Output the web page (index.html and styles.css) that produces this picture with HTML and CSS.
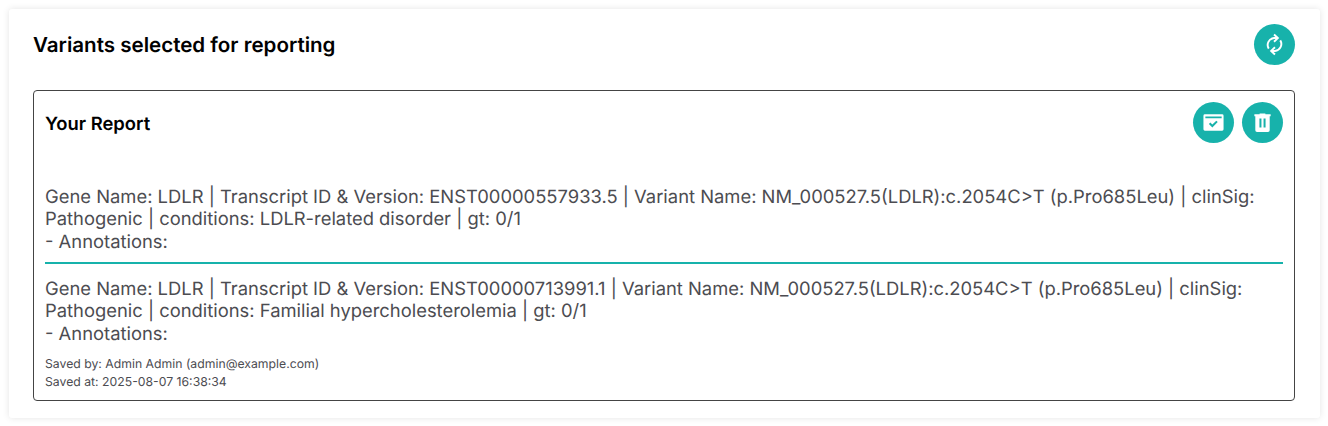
FILE: index.html
```html
<!DOCTYPE html>
<html lang="en">
<head>
<meta charset="utf-8">
<title>Variants selected for reporting</title>
<link rel="stylesheet" href="styles.css">
</head>
<body>
<main class="panel">
  <header class="panel-header">
    <h1 class="title">Variants selected for reporting</h1>
    <button class="round-button" aria-label="Refresh"><svg class="icon refresh" viewBox="0 0 24 24"><path d="M6 16.300A7.200 7.200 0 0 1 11.500 5.300H15M11.500 1.500 15.500 5.300l-4 3.800M18 7.700A7.200 7.200 0 0 1 12.500 18.700H9M12.500 22.500 8.500 18.700l4-3.800"/></svg></button>
  </header>
  <section class="report">
    <div class="report-header">
      <h2 class="subtitle">Your Report</h2>
      <div class="actions">
        <button class="round-button" aria-label="Approve"><svg class="icon" viewBox="0 0 24 24"><path fill-rule="evenodd" d="M3 3.500h18a1.500 1.500 0 0 1 1.500 1.500v14a1.500 1.500 0 0 1-1.500 1.500H3A1.500 1.500 0 0 1 1.500 19V5A1.500 1.500 0 0 1 3 3.500zm.5 2.300v1.700h17V5.800zm7.300 11.400 5.600-5.600-1.500-1.500-4.100 4.100-2.100-2.100-1.500 1.500z"/></svg></button>
        <button class="round-button" aria-label="Delete"><svg class="icon" viewBox="0 0 24 24"><path fill-rule="evenodd" d="M15 2.500H9v1H3.500v2h1V20a1.800 1.800 0 0 0 1.800 1.800h11.400a1.800 1.800 0 0 0 1.800-1.800V5.500h1v-2H15zM8.800 7.800h2.100v9.500H8.800zm4.300 0h2.100v9.500h-2.100z"/></svg></button>
      </div>
    </div>
    <p class="variant">Gene Name: LDLR | Transcript ID &amp; Version: ENST00000557933.5 | Variant Name: NM_000527.5(LDLR):c.2054C&gt;T (p.Pro685Leu) | clinSig:<br>Pathogenic | conditions: LDLR-related disorder | gt: 0/1<br>- Annotations:</p>
    <hr class="divider">
    <p class="variant">Gene Name: LDLR | Transcript ID &amp; Version: ENST00000713991.1 | Variant Name: NM_000527.5(LDLR):c.2054C&gt;T (p.Pro685Leu) | clinSig:<br>Pathogenic | conditions: Familial hypercholesterolemia | gt: 0/1<br>- Annotations:</p>
    <p class="saved">Saved by: Admin Admin (admin@example.com)<br>Saved at: 2025-08-07 16:38:34</p>
  </section>
</main>
</body>
</html>
```
FILE: styles.css
```css
* { box-sizing: border-box; }
body { margin: 0; background: #fff; font-family: Inter, sans-serif; text-rendering: geometricPrecision; color: #000; overflow: hidden; }
h1, h2, p { margin: 0; }
.panel { margin: 9px 8px 8px 9px; height: 409px; padding: 15px 25px 15px 24px; background: #fff; border-radius: 3px; box-shadow: 0 0 7px rgba(0,0,0,.11); }
.panel-header, .report-header { display: flex; align-items: center; justify-content: space-between; }
.title { font-size: 20.55px; font-weight: 600; line-height: 24px; }
.subtitle { font-size: 18.4px; font-weight: 600; line-height: 25px; padding-top: 3px; }
.round-button { width: 41px; height: 41px; padding: 0; border: 0; border-radius: 50%; background: #17b2ab; display: flex; align-items: center; justify-content: center; }
.icon { width: 23px; height: 23px; fill: #fff; }
.refresh { fill: none; stroke: #fff; stroke-width: 2; }
.actions { display: flex; gap: 8px; }
.report { margin-top: 25px; height: 311px; padding: 11px; border: 1px solid #444; border-radius: 4px; }
.report-header { margin-bottom: 42.6px; }
.variant { font-size: 18.39px; font-weight: 400; line-height: 22.5px; color: #4c4c51; white-space: nowrap; }
.divider { height: 2px; margin: 9px 0 13.6px; border: 0; background: #17b2ab; }
.saved { margin-top: 9.4px; font-size: 12.24px; font-weight: 400; line-height: 18px; color: #4c4c51; }
```
